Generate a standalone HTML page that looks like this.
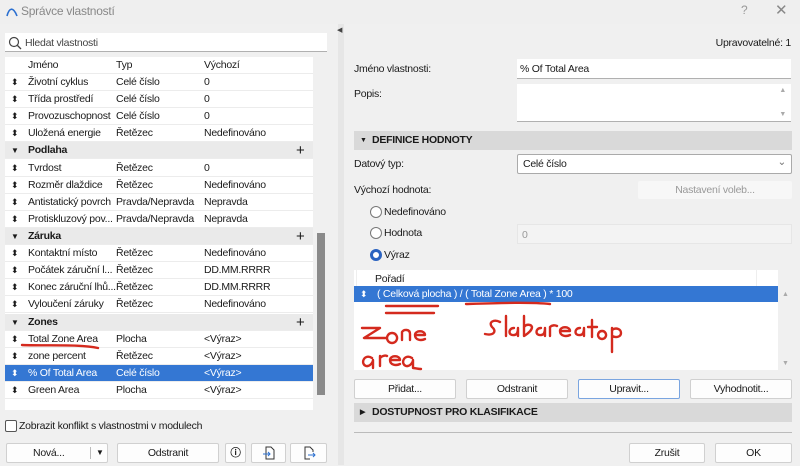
<!DOCTYPE html>
<html><head><meta charset="utf-8"><style>
*{box-sizing:border-box;margin:0;padding:0}
body{width:800px;height:465px;overflow:hidden;background:#f0f0f0;font-family:"Liberation Sans",sans-serif;font-size:10.5px;letter-spacing:-0.25px;color:#1a1a1a;position:relative}
.a{position:absolute}
.row{position:absolute;left:5px;width:308px;height:17px;background:#fff;border-bottom:1px solid #ececec;line-height:17px}
.row span{position:absolute;white-space:nowrap}
.grp{background:#eaeaea;font-weight:bold}
.sel{background:#3477d3;color:#fff}
.btn{position:absolute;background:#fdfdfd;border:1px solid #d0d0d0;border-radius:2px;text-align:center;line-height:18px;height:20px}
.inp{position:absolute;background:#fff;border-bottom:1px solid #b0b0b0}
.sec{position:absolute;left:354px;width:438px;height:19px;background:#d9d9d9;font-weight:bold;line-height:19px;padding-left:18px}
.radio{position:absolute;left:370px;width:12px;height:12px;border:1px solid #777;border-radius:50%;background:#fff}
.ud{font-size:9px}
</style></head><body>
<div class="a" style="left:0;top:0;width:800px;height:24px;background:#efefef"></div>
<svg class="a" style="left:5px;top:5px" width="14" height="12"><path d="M2 11 C4 3 8 1 12 11" stroke="#2a6fd0" stroke-width="1.6" fill="none"/></svg>
<div class="a" style="left:21px;top:4px;color:#888;font-size:12px">Správce vlastností</div>
<div class="a" style="left:741px;top:3px;color:#999;font-size:12px">?</div>
<div class="a" style="left:775px;top:1px;color:#888;font-size:15px">✕</div>
<div class="a" style="left:338px;top:24px;width:6px;height:441px;background:#e6e6e6"></div>
<div class="a" style="left:337px;top:26px;font-size:7px;color:#444">◀</div>

<div class="inp" style="left:5px;top:33px;width:322px;height:19px"></div>
<svg class="a" style="left:8px;top:36px" width="14" height="14"><circle cx="6" cy="6" r="4.5" stroke="#444" fill="none" stroke-width="1.2"/><path d="M9.5 9.5 L13 13" stroke="#444" stroke-width="1.3"/></svg>
<div class="a" style="left:25px;top:37px;color:#444">Hledat vlastnosti</div>

<div class="a" style="left:5px;top:57px;width:308px;height:353px;background:#fff"></div>
<div class="a" style="left:291px;top:57px;width:1px;height:17px;background:#eee"></div>
<div class="row" style="top:57px"><span style="left:23px">Jméno</span><span style="left:111px">Typ</span><span style="left:199px">Výchozí</span></div>
<div class="row" style="top:74px"><span class="ud" style="left:6px">⬍</span><span style="left:23px">Životní cyklus</span><span style="left:111px">Celé číslo</span><span style="left:199px">0</span></div>
<div class="row" style="top:91px"><span class="ud" style="left:6px">⬍</span><span style="left:23px">Třída prostředí</span><span style="left:111px">Celé číslo</span><span style="left:199px">0</span></div>
<div class="row" style="top:108px"><span class="ud" style="left:6px">⬍</span><span style="left:23px">Provozuschopnost</span><span style="left:111px">Celé číslo</span><span style="left:199px">0</span></div>
<div class="row" style="top:125px"><span class="ud" style="left:6px">⬍</span><span style="left:23px">Uložená energie</span><span style="left:111px">Řetězec</span><span style="left:199px">Nedefinováno</span></div>
<div class="row grp" style="top:142px"><span style="left:6px;font-size:8px">▼</span><span style="left:23px">Podlaha</span><span style="left:291px;font-weight:normal;font-size:15px">+</span></div>
<div class="row" style="top:160px"><span class="ud" style="left:6px">⬍</span><span style="left:23px">Tvrdost</span><span style="left:111px">Řetězec</span><span style="left:199px">0</span></div>
<div class="row" style="top:177px"><span class="ud" style="left:6px">⬍</span><span style="left:23px">Rozměr dlaždice</span><span style="left:111px">Řetězec</span><span style="left:199px">Nedefinováno</span></div>
<div class="row" style="top:194px"><span class="ud" style="left:6px">⬍</span><span style="left:23px">Antistatický povrch</span><span style="left:111px">Pravda/Nepravda</span><span style="left:199px">Nepravda</span></div>
<div class="row" style="top:211px"><span class="ud" style="left:6px">⬍</span><span style="left:23px">Protiskluzový pov...</span><span style="left:111px">Pravda/Nepravda</span><span style="left:199px">Nepravda</span></div>
<div class="row grp" style="top:228px"><span style="left:6px;font-size:8px">▼</span><span style="left:23px">Záruka</span><span style="left:291px;font-weight:normal;font-size:15px">+</span></div>
<div class="row" style="top:245px"><span class="ud" style="left:6px">⬍</span><span style="left:23px">Kontaktní místo</span><span style="left:111px">Řetězec</span><span style="left:199px">Nedefinováno</span></div>
<div class="row" style="top:262px"><span class="ud" style="left:6px">⬍</span><span style="left:23px">Počátek záruční l...</span><span style="left:111px">Řetězec</span><span style="left:199px">DD.MM.RRRR</span></div>
<div class="row" style="top:279px"><span class="ud" style="left:6px">⬍</span><span style="left:23px">Konec záruční lhů...</span><span style="left:111px">Řetězec</span><span style="left:199px">DD.MM.RRRR</span></div>
<div class="row" style="top:296px"><span class="ud" style="left:6px">⬍</span><span style="left:23px">Vyloučení záruky</span><span style="left:111px">Řetězec</span><span style="left:199px">Nedefinováno</span></div>
<div class="row grp" style="top:314px"><span style="left:6px;font-size:8px">▼</span><span style="left:23px">Zones</span><span style="left:291px;font-weight:normal;font-size:15px">+</span></div>
<div class="row" style="top:331px"><span class="ud" style="left:6px">⬍</span><span style="left:23px">Total Zone Area</span><span style="left:111px">Plocha</span><span style="left:199px">&lt;Výraz&gt;</span></div>
<div class="row" style="top:348px"><span class="ud" style="left:6px">⬍</span><span style="left:23px">zone percent</span><span style="left:111px">Řetězec</span><span style="left:199px">&lt;Výraz&gt;</span></div>
<div class="row sel" style="top:365px"><span class="ud" style="left:6px">⬍</span><span style="left:23px">% Of Total Area</span><span style="left:111px">Celé číslo</span><span style="left:199px">&lt;Výraz&gt;</span></div>
<div class="row" style="top:382px"><span class="ud" style="left:6px">⬍</span><span style="left:23px">Green Area</span><span style="left:111px">Plocha</span><span style="left:199px">&lt;Výraz&gt;</span></div>
<div class="a" style="left:317px;top:233px;width:8px;height:162px;background:#8a8a8a"></div>

<div class="a" style="left:5px;top:420px;width:12px;height:12px;border:1px solid #555;border-radius:2px;background:#fff"></div>
<div class="a" style="left:19px;top:420px">Zobrazit konflikt s vlastnostmi v modulech</div>
<div class="btn" style="left:6px;top:443px;width:102px"><span style="position:absolute;left:26px">Nová...</span><span style="position:absolute;left:83px;top:3px;width:1px;height:12px;background:#bbb"></span><span style="position:absolute;left:89px;font-size:8px">▼</span></div>
<div class="btn" style="left:117px;top:443px;width:102px">Odstranit</div>
<div class="btn" style="left:225px;top:443px;width:21px;font-weight:bold">ⓘ</div>
<div class="btn" style="left:251px;top:443px;width:35px"><svg width="14" height="14" style="margin-top:2px"><path d="M4 1h5l3 3v9H4z" stroke="#333" fill="none"/><path d="M1 8h7M6 6l2 2-2 2" stroke="#2a6fd0" fill="none"/></svg></div>
<div class="btn" style="left:290px;top:443px;width:37px"><svg width="14" height="14" style="margin-top:2px"><path d="M8 13H3V1h5l3 3v2" stroke="#333" fill="none"/><path d="M6 9h7M11 7l2 2-2 2" stroke="#2a6fd0" fill="none"/></svg></div>

<div class="a" style="right:9px;top:37px">Upravovatelné: 1</div>
<div class="a" style="left:354px;top:63px">Jméno vlastnosti:</div>
<div class="inp" style="left:517px;top:59px;width:274px;height:20px"><span style="position:absolute;left:3px;top:4px">% Of Total Area</span></div>
<div class="a" style="left:354px;top:88px">Popis:</div>
<div class="inp" style="left:517px;top:84px;width:274px;height:38px"><span style="position:absolute;right:5px;top:3px;font-size:7px;color:#aaa">▲</span><span style="position:absolute;right:5px;bottom:3px;font-size:7px;color:#aaa">▼</span></div>
<div class="sec" style="top:131px"><span style="position:absolute;left:6px;font-size:7px">▼</span>DEFINICE HODNOTY</div>
<div class="a" style="left:354px;top:158px">Datový typ:</div>
<div class="a" style="left:517px;top:154px;width:275px;height:20px;background:#fff;border:1px solid #aaa;border-radius:2px"><span style="position:absolute;left:5px;top:3px">Celé číslo</span><span style="position:absolute;right:5px;top:1px;color:#777">⌄</span></div>
<div class="a" style="left:354px;top:184px">Výchozí hodnota:</div>
<div class="a" style="left:638px;top:181px;width:154px;height:18px;background:#f7f7f7;border-radius:2px;color:#999;text-align:center;line-height:18px">Nastavení voleb...</div>
<div class="radio" style="top:206px"></div><div class="a" style="left:384px;top:206px">Nedefinováno</div>
<div class="radio" style="top:227px"></div><div class="a" style="left:384px;top:227px">Hodnota</div>
<div class="a" style="left:517px;top:224px;width:275px;height:20px;background:#f3f3f3;border:1px solid #e6e6e6"><span style="position:absolute;left:4px;top:4px;color:#999">0</span></div>
<div class="radio" style="top:249px;border:3px solid #2a62c0"></div><div class="a" style="left:384px;top:249px">Výraz</div>

<div class="a" style="left:354px;top:270px;width:424px;height:100px;background:#fff"></div>
<div class="a" style="left:375px;top:273px">Pořadí</div>
<div class="a" style="left:356px;top:270px;width:1px;height:16px;background:#eee"></div>
<div class="a" style="left:756px;top:270px;width:1px;height:16px;background:#eee"></div>
<div class="a" style="left:354px;top:286px;width:424px;height:16px;background:#3477d3;color:#fff;line-height:16px"><span class="ud" style="position:absolute;left:6px">⬍</span><span style="position:absolute;left:23px">( Celková plocha ) / ( Total Zone Area ) * 100</span></div>
<div class="a" style="left:782px;top:291px;font-size:7px;color:#aaa">▲</div>
<div class="a" style="left:782px;top:360px;font-size:7px;color:#aaa">▼</div>

<svg class="a" style="left:0;top:0" width="800" height="465" fill="none" stroke="#d42a1e" stroke-width="2.4" stroke-linecap="round" stroke-linejoin="round">
<path d="M22 345 C50 346 80 344 98 348"/>
<path d="M386 306h52M386 313h48M466 304 C500 303 530 302 550 304"/>
<path d="M362 328h18l-16 10h22M392 333a5 5 0 1 0 0.1 0M402 340v-8c2-3 8-3 8 2v6M415 335h10c0-5-10-5-10 0s6 6 10 4"/>
<path d="M372 358c-8-5-12 6-6 8 4 1 7-4 7-6v8M380 356v10M380 358c2-2 5-3 7-2M390 360h10c0-5-10-5-10 0s6 6 10 4M412 358c-8-5-12 6-6 8 4 1 7-4 7-6v8 c2 0 5 1 8 1"/>
<path d="M500 322c-6-3-12 0-8 5 5 4 2 9-7 7M506 316v20M514 328c-6 0-6 8 0 7 3 0 4-3 4-7v8M524 316v20c3-2 8-5 8-9-1-3-6-3-8 0M541 328c-6 0-6 8 0 7 3 0 4-3 4-7v8M550 336v-9c2-2 5-2 7-1M560 331h10c0-5-10-5-10 0s6 6 10 4M580 328c-6 0-6 8 0 7 3 0 4-3 4-7v8M592 320v17M588 327h9M602 331a4 4 0 1 0 0.1 0M612 328v24M612 330c4-3 9-1 9 3s-5 5-9 3"/>
</svg>

<div class="btn" style="left:354px;top:379px;width:102px">Přidat...</div>
<div class="btn" style="left:466px;top:379px;width:102px">Odstranit</div>
<div class="btn" style="left:578px;top:379px;width:102px;border-color:#7aa5e0">Upravit...</div>
<div class="btn" style="left:690px;top:379px;width:102px">Vyhodnotit...</div>
<div class="sec" style="top:403px"><span style="position:absolute;left:6px;font-size:7px">▶</span>DOSTUPNOST PRO KLASIFIKACE</div>
<div class="a" style="left:354px;top:432px;width:438px;height:1px;background:#bbb"></div>
<div class="btn" style="left:629px;top:443px;width:76px">Zrušit</div>
<div class="btn" style="left:715px;top:443px;width:77px">OK</div>
</body></html>
